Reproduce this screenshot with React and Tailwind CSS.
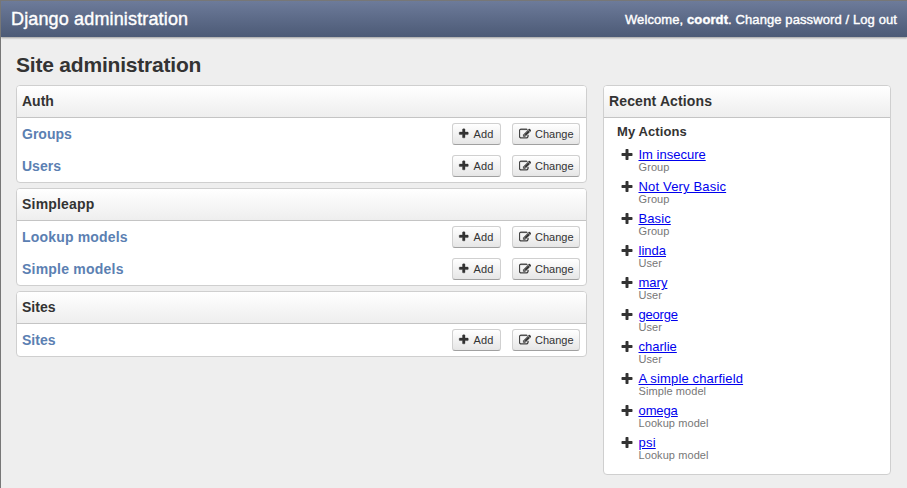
const PLUS =
  'M1600 736v192q0 40-28 68t-68 28h-416v416q0 40-28 68t-68 28h-192q-40 0-68-28t-28-68v-416h-416q-40 0-68-28t-28-68v-192q0-40 28-68t68-28h416v-416q0-40 28-68t68-28h192q40 0 68 28t28 68v416h416q40 0 68 28t28 68z';
const EDIT =
  'M888 1184l116-116-152-152-116 116v56h96v96h56zm440-720q-16-16-33 1l-350 350q-17 17-1 33t33-1l350-350q17-17 1-33zm80 594v190q0 119-84.5 203.5t-203.5 84.5h-832q-119 0-203.5-84.5t-84.5-203.5v-832q0-119 84.5-203.5t203.5-84.5h832q63 0 117 25 15 7 18 23 3 17-9 29l-49 49q-14 14-32 8-23-6-45-6h-832q-66 0-113 47t-47 113v832q0 66 47 113t113 47h832q66 0 113-47t47-113v-126q0-13 9-22l64-64q15-15 35-7t20 29zm-96-738l288 288-672 672h-288v-288zm444 132l-92 92-288-288 92-92q28-28 68-28t68 28l152 152q28 28 28 68t-28 68z';

function Icon({ d, className }) {
  return (
    <svg viewBox="0 0 1792 1792" fill="currentColor" className={className} aria-hidden="true">
      <path d={d} />
    </svg>
  );
}

const apps = [
  { name: 'Auth', tracking: 'tracking-[0px]', models: [['Groups', 'tracking-[0px]'], ['Users', 'tracking-[0px]']] },
  { name: 'Simpleapp', tracking: 'tracking-[0.2px]', models: [['Lookup models', 'tracking-[0.18px]'], ['Simple models', 'tracking-[0.22px]']] },
  { name: 'Sites', tracking: 'tracking-[0px]', models: [['Sites', 'tracking-[0px]']] },
];

const actions = [
  ['Im insecure', 'Group', 'tracking-[0px]'],
  ['Not Very Basic', 'Group', 'tracking-[0.17px]'],
  ['Basic', 'Group', 'tracking-[0.1px]'],
  ['linda', 'User', 'tracking-[0px]'],
  ['mary', 'User', 'tracking-[0px]'],
  ['george', 'User', 'tracking-[-0.2px]'],
  ['charlie', 'User', 'tracking-[0px]'],
  ['A simple charfield', 'Simple model', 'tracking-[0.15px]'],
  ['omega', 'Lookup model', 'tracking-[-0.1px]'],
  ['psi', 'Lookup model', 'tracking-[0.2px]'],
];

function Panel({ title, tracking, className = '', children }) {
  return (
    <section className={`overflow-hidden rounded-[4px] border border-[#cfcfcf] bg-white ${className}`}>
      <h2 className={`h-8 border-b border-[#c4c4c4] bg-linear-to-b from-white to-[#eee] pl-[5px] text-[14px] leading-[30px] font-bold ${tracking}`}>
        {title}
      </h2>
      {children}
    </section>
  );
}

function Button({ icon, label, width, iconClass }) {
  return (
    <button
      className={`flex h-[22px] items-center rounded-[3px] border border-[#d0d0d0] border-b-[#a0a0a0] bg-linear-to-b from-white to-[#e6e6e6] text-[11px] leading-5 text-[#333] ${width}`}
    >
      <Icon d={icon} className={iconClass} />
      {label}
    </button>
  );
}

export default function App() {
  return (
    <div className="h-[488px] w-[907px] overflow-hidden border-t border-l border-[#777] bg-[#eee] font-['Liberation_Sans',Arial,sans-serif] text-[#333]">
      <header className="flex h-9 justify-between bg-linear-to-b from-[#6d7b9a] to-[#4c5a76] pr-[10px] pl-[10px] text-white shadow-[0_1px_2px_rgba(0,0,0,0.35)]">
        <div className="text-[18px] leading-[36px] tracking-[0.15px] [-webkit-text-stroke:0.4px_white]">Django administration</div>
        <div className="text-[13px] leading-[37px] tracking-[0.1px] [-webkit-text-stroke:0.4px_white]">
          Welcome, <b>coordt</b>. Change password / Log out
        </div>
      </header>
      <h1 className="mt-[14px] ml-[15px] h-[34px] text-[21px] leading-[27px] font-bold tracking-[-0.2px]">Site administration</h1>
      <main className="ml-[15px] flex items-start gap-4">
        <div className="flex w-[571px] flex-col gap-[5px]">
          {apps.map((app) => (
            <Panel key={app.name} title={app.name} tracking={app.tracking}>
              {app.models.map(([name, tracking]) => (
                <div key={name} className="flex h-8 items-center pr-[6px] pl-[5px]">
                  <a className={`flex-1 text-[14px] font-bold text-[#5b80b2] ${tracking}`}>{name}</a>
                  <div className="flex gap-[11px]">
                    <Button icon={PLUS} label="Add" width="w-[49px] tracking-[0.2px]" iconClass="mr-[4px] ml-[5px] size-[11.5px] stroke-current stroke-[60]" />
                    <Button icon={EDIT} label="Change" width="w-[68px]" iconClass="mr-[4px] ml-[6px] size-[12px] stroke-current stroke-[50]" />
                  </div>
                </div>
              ))}
            </Panel>
          ))}
        </div>
        <Panel title="Recent Actions" tracking="tracking-[0.12px]" className="h-[390px] w-[288px]">
          <h3 className="mt-[5px] ml-[13px] text-[13px] leading-[18px] font-bold tracking-[0.1px]">My Actions</h3>
          <ul className="mt-[6px] ml-[16px]">
            {actions.map(([name, kind, tracking]) => (
              <li key={name} className="flex h-8">
                <Icon d={PLUS} className="mt-[0.5px] mr-[4.5px] size-[14px]" />
                <div>
                  <a className={`block text-[13px] leading-[15px] text-[#00e] underline ${tracking}`}>{name}</a>
                  <div className="text-[11px] leading-[11px] tracking-[0.08px] text-[#777]">{kind}</div>
                </div>
              </li>
            ))}
          </ul>
        </Panel>
      </main>
    </div>
  );
}
